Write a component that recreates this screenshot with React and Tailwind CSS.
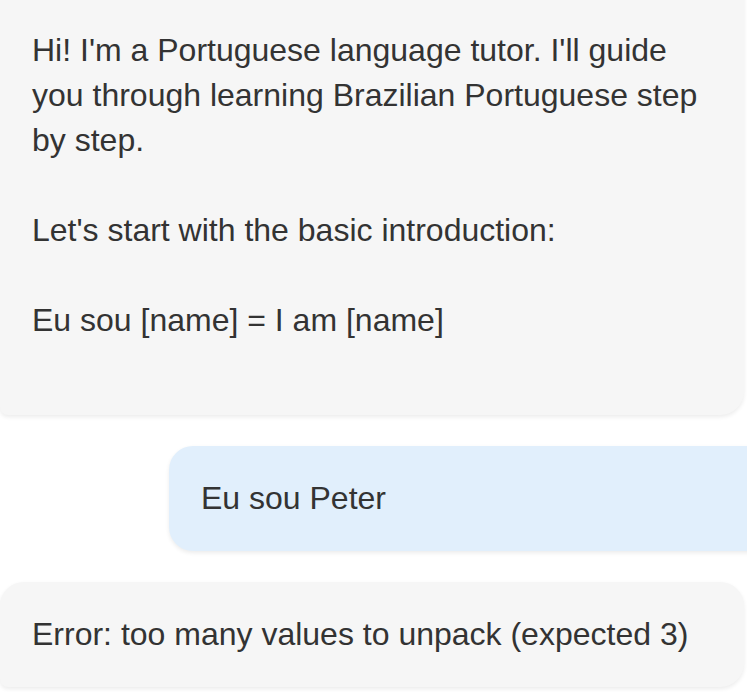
import React from 'react';

const messages = [
  {
    role: 'assistant',
    text: "Hi! I'm a Portuguese language tutor. I'll guide you through learning Brazilian Portuguese step by step.\n\nLet's start with the basic introduction:\n\nEu sou [name] = I am [name]",
  },
  { role: 'user', text: 'Eu sou Peter' },
  { role: 'assistant', text: 'Error: too many values to unpack (expected 3)' },
];

function Bubble({ role, text, first }) {
  if (role === 'user') {
    return (
      <div className="ml-[169px] -mr-8 rounded-[24px] rounded-br-[8px] bg-[#e1effc] px-8 py-[30px] shadow-[0_2px_4px_rgba(0,0,0,0.08)]">
        <p className="whitespace-pre-line">{text}</p>
      </div>
    );
  }
  return (
    <div
      className={`mr-[3px] rounded-[24px] rounded-bl-[8px] bg-[#f6f6f6] px-8 shadow-[0_2px_4px_rgba(0,0,0,0.08)] ${
        first ? '-mt-[60px] pt-[88px] pb-[72px]' : 'py-[30px]'
      }`}
    >
      <p className="whitespace-pre-line">{text}</p>
    </div>
  );
}

export default function App() {
  return (
    <div className="h-[692px] overflow-hidden bg-white font-['Liberation_Sans',Arial,sans-serif] text-[32px] leading-[45px] text-[#333]">
      <div className="flex flex-col gap-[31px]">
        {messages.map((m, i) => (
          <Bubble key={i} role={m.role} text={m.text} first={i === 0} />
        ))}
      </div>
    </div>
  );
}
